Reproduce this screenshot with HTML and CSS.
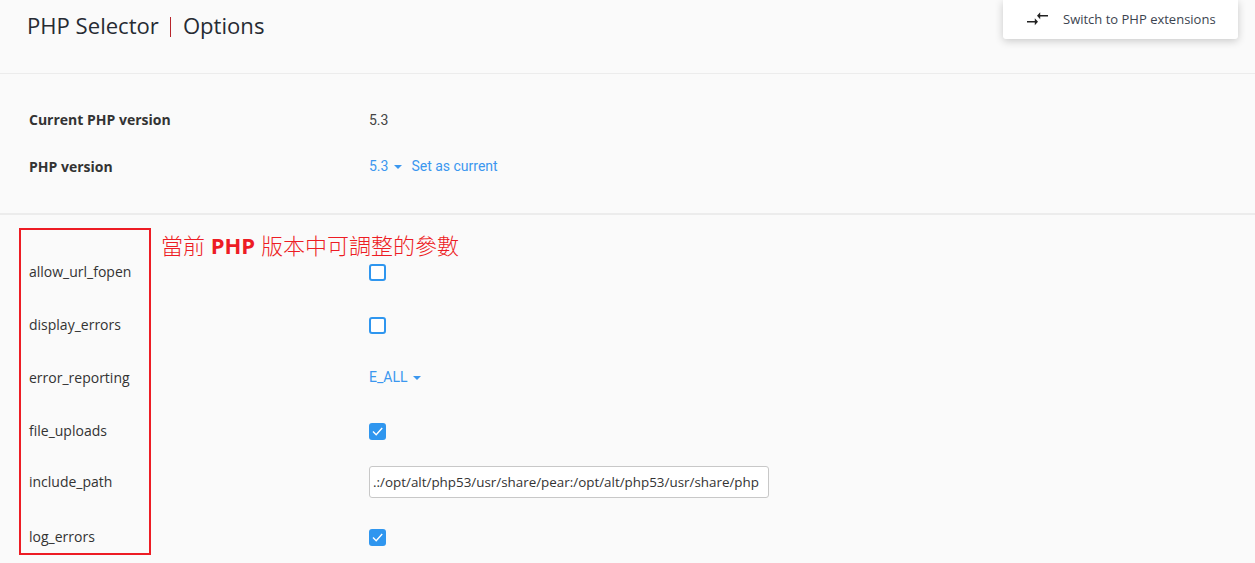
FILE: index.html
```html
<!DOCTYPE html>
<html lang="zh-Hant">
<head>
<meta charset="utf-8">
<title>PHP Selector | Options</title>
<link rel="stylesheet" href="styles.css">
</head>
<body>
<header class="header">
  <h1 class="title">PHP Selector<span class="sep"></span>Options</h1>
  <button class="switch" type="button">
    <svg class="switch-icon" width="21" height="14" viewBox="0 0 21 14" aria-hidden="true">
      <path d="M12 3.700h9M0 9.700h9" stroke="#222" stroke-width="1.600" fill="none"/>
      <path d="M10 3.700l3.200-3.500v7zM11 9.700l-3.200-3.500v7z" fill="#222"/>
    </svg>
    <span class="switch-label">Switch to PHP extensions</span>
  </button>
</header>
<section class="versions">
  <div class="row vrow-a">
    <div class="label strong">Current PHP version</div>
    <div class="value">5.3</div>
  </div>
  <div class="row vrow-b">
    <div class="label strong">PHP version</div>
    <div class="value link"><span>5.3</span><i class="caret"></i><span class="set">Set as current</span></div>
  </div>
</section>
<section class="options">
  <div class="row opt r1"><div class="label">allow_url_fopen</div><div class="value"><span class="check"></span></div></div>
  <div class="row opt r2"><div class="label">display_errors</div><div class="value"><span class="check"></span></div></div>
  <div class="row opt r3"><div class="label">error_reporting</div><div class="value link"><span>E_ALL</span><i class="caret"></i></div></div>
  <div class="row opt r4"><div class="label">file_uploads</div><div class="value"><span class="check on"><svg width="17" height="17" viewBox="0 0 17 17" aria-hidden="true"><path d="M4 8.500l3.200 3.200L13.200 5" stroke="#fff" stroke-width="1.400" fill="none"/></svg></span></div></div>
  <div class="row opt r5"><div class="label">include_path</div><div class="value"><input class="text" type="text" value=".:/opt/alt/php53/usr/share/pear:/opt/alt/php53/usr/share/php"></div></div>
  <div class="row opt r6"><div class="label">log_errors</div><div class="value"><span class="check on"><svg width="17" height="17" viewBox="0 0 17 17" aria-hidden="true"><path d="M4 8.500l3.200 3.200L13.200 5" stroke="#fff" stroke-width="1.400" fill="none"/></svg></span></div></div>
</section>
<div class="mark-box"></div>
<div class="mark-text">當前 <b>PHP</b> 版本中可調整的參數</div>
</body>
</html>
```
FILE: styles.css
```css
* { box-sizing: border-box; }
html, body { margin: 0; height: 563px; overflow: hidden; }
body {
  position: relative;
  background: #fafafa;
  color: #333;
  font-family: "Open Sans", sans-serif;
  font-size: 14px;
}
.header {
  height: 74px;
  padding-left: 27px;
  padding-right: 17px;
  display: flex;
  justify-content: space-between;
  align-items: flex-start;
  border-bottom: 1px solid #ececec;
}
.title {
  margin: 9px 0 0;
  font-size: 22.100px;
  font-weight: 400;
  line-height: 32px;
  color: #262b33;
}
.sep {
  display: inline-block;
  width: 1px;
  height: 20px;
  margin: 0 12px 0 11px;
  background: #b8252c;
  vertical-align: -3px;
}
.switch {
  width: 235px;
  height: 39px;
  padding: 0 0 0 24px;
  display: flex;
  align-items: center;
  gap: 15px;
  border: 0;
  border-radius: 0 0 3px 3px;
  background: #fff;
  box-shadow: 0 2px 8px rgba(0, 0, 0, .2);
  color: #3c4450;
  font: 400 13px "Open Sans", sans-serif;
}
.switch-icon { margin-top: -1px; }
.switch-label { margin-top: -2px; }
.versions {
  height: 141px;
  padding-top: 22px;
  border-bottom: 2px solid #ececec;
}
.row { display: flex; align-items: center; padding-left: 29px; }
.label { width: 340px; }
.strong { font-weight: 700; color: #333; }
.value { display: flex; align-items: center; color: #444; font-family: Roboto, sans-serif; }
.vrow-a, .vrow-b { height: 47px; }
.vrow-b .value { margin-top: -1px; }
.link { color: #3b97ef; }
.caret {
  width: 0;
  height: 0;
  margin: 1px 0 0 6px;
  border: 4px solid transparent;
  border-top-color: #3b97ef;
  border-bottom: 0;
}
.r3 .caret { margin-left: 5px; }
.set { margin-left: 9px; }
.options { padding-top: 30px; }
.opt { height: 53px; }
.r1 .check, .r2 .check { margin-top: 2px; }
.r3 .value { margin-top: -1px; }
.r5 { height: 50px; }
.r6 { height: 60px; }
.r5 .label, .r6 .label { margin-top: -2px; }
.check {
  display: block;
  width: 17px;
  height: 17px;
  border: 2px solid #2f96ef;
  border-radius: 3px;
  background: #fff;
}
.check.on { border: 0; background: #2f96ef; }
.check svg { display: block; }
.r4 .check { margin-top: 1px; }
.text {
  width: 400px;
  height: 32px;
  padding: 0 3px;
  border: 1px solid #c8c8c8;
  border-radius: 3px;
  background: #fff;
  color: #333;
  font: 400 13.400px "Open Sans", sans-serif;
}
.mark-box {
  position: absolute;
  left: 19px;
  top: 228px;
  width: 132px;
  height: 327px;
  border: 2px solid #ed1c24;
}
.mark-text {
  position: absolute;
  left: 161px;
  top: 230px;
  color: #ed1c24;
  font: 300 22px/30px "Open Sans", "Noto Sans CJK TC", sans-serif;
  white-space: nowrap;
}
.mark-text b { font-weight: 700; }
```
